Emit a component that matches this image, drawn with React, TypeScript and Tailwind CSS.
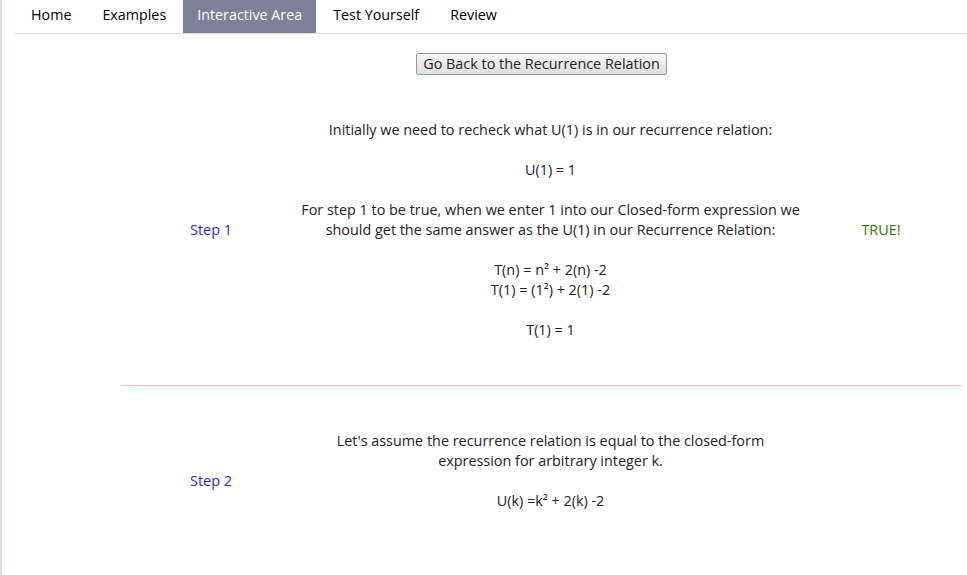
import React from "react";

const tabs = ["Home", "Examples", "Interactive Area", "Test Yourself", "Review"];

function Line({ children }: { children?: React.ReactNode }) {
  return <div className="h-[20px] leading-[20px] whitespace-nowrap">{children}</div>;
}

export default function App() {
  return (
    <div className="min-h-screen bg-white flex text-[#222]" style={{ fontFamily: '"Open Sans", "Liberation Sans", sans-serif' }}>
      <div className="w-[2px] bg-[#dcdcee]" />
      <div className="flex-1 pl-[13px]">
        <ul className="flex gap-[3px] h-[34px] border-b border-[#dddddd] pl-[2px]">
          {tabs.map((t) => (
            <li
              key={t}
              className={
                t === "Interactive Area"
                  ? "h-[33px] leading-[29px] px-[14px] text-[14.3px] bg-[#80809a] text-white"
                  : "h-[33px] leading-[29px] px-[14px] text-[14.3px] text-black"
              }
            >
              {t}
            </li>
          ))}
        </ul>

        <div className="pl-[106px] pr-[5px]">
          <div className="flex justify-center pt-[19px]">
            <button className="h-[22px] px-[6px] text-[14.4px] leading-[20px] text-[#222] border border-[#999] rounded-[2px] bg-gradient-to-b from-[#f6f6f6] to-[#dedede]">
              Go Back to the Recurrence Relation
            </button>
          </div>

          <div className="grid grid-cols-[180px_1fr_162px] text-[14.4px] border-b border-[#ffc0cb] pt-[45px] pb-[45px]">
            <div className="flex items-center justify-center text-[#1f1ff5]">Step 1</div>
            <div className="flex flex-col items-center text-center">
              <Line>Initially we need to recheck what U(1) is in our recurrence relation:</Line>
              <Line />
              <Line>U(1) = 1</Line>
              <Line />
              <Line>For step 1 to be true, when we enter 1 into our Closed-form expression we</Line>
              <Line>should get the same answer as the U(1) in our Recurrence Relation:</Line>
              <Line />
              <Line>T(n) = n² + 2(n) -2</Line>
              <Line>T(1) = (1²) + 2(1) -2</Line>
              <Line />
              <Line>T(1) = 1</Line>
            </div>
            <div className="flex items-center justify-center text-[#2e7200]">TRUE!</div>
          </div>

          <div className="grid grid-cols-[180px_1fr_162px] text-[14.4px] pt-[45px] pb-[45px]">
            <div className="flex items-center justify-center text-[#1f1ff5]">Step 2</div>
            <div className="flex flex-col items-center text-center">
              <Line>Let's assume the recurrence relation is equal to the closed-form</Line>
              <Line>expression for arbitrary integer k.</Line>
              <Line />
              <Line>U(k) =k² + 2(k) -2</Line>
              <Line />
            </div>
            <div />
          </div>
        </div>
      </div>
    </div>
  );
}
